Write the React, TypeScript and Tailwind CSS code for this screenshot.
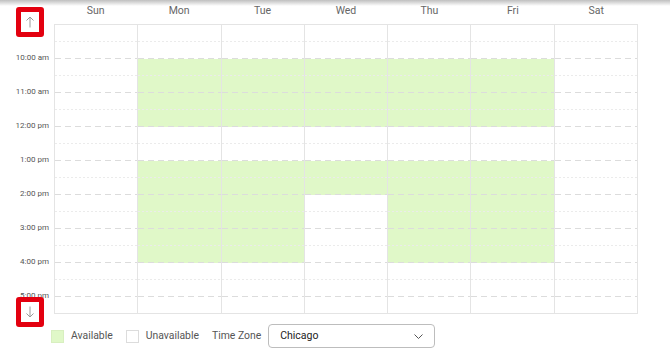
import React from 'react';

const days = ['Sun', 'Mon', 'Tue', 'Wed', 'Thu', 'Fri', 'Sat'];
const hours = ['10:00 am', '11:00 am', '12:00 pm', '1:00 pm', '2:00 pm', '3:00 pm', '4:00 pm', '5:00 pm'];

// slot i covers 9:00 + 30i min .. +30 min
const isAvailable = (day: number, slot: number) => {
    if (day < 1 || day > 5) return false;
    if (slot >= 2 && slot <= 5) return true;
    if (day === 3) return slot >= 8 && slot <= 9;
    return slot >= 8 && slot <= 13;
};

const Arrow: React.FC<{ down?: boolean }> = ({ down }) => (
    <svg width="10" height="12" viewBox="0 0 10 12" fill="none" stroke="#9a9a9a" strokeWidth="1">
        {down ? (
            <>
                <path d="M5 0.5V11" />
                <path d="M1.5 7.5L5 11L8.5 7.5" />
            </>
        ) : (
            <>
                <path d="M5 1V11.5" />
                <path d="M1.5 4.5L5 1L8.5 4.5" />
            </>
        )}
    </svg>
);

const ScrollButton: React.FC<{ down?: boolean; className?: string }> = ({ down, className }) => (
    <div className={`w-[28px] h-[30px] border-[5px] border-[#e3000f] rounded-[3px] bg-white flex items-center justify-center ${className ?? ''}`}>
        <Arrow down={down} />
    </div>
);

const DayColumn: React.FC<{ day: number }> = ({ day }) => (
    <div className="flex-1 flex flex-col border-l border-[#e4e4e4]">
        {Array.from({ length: 17 }).map((_, i) => {
            const line =
                i === 16
                    ? 'bg-[#e4e4e4]'
                    : i % 2 === 1
                        ? 'bg-[repeating-linear-gradient(90deg,#dcdcdc_0_6px,transparent_6px_10px)]'
                        : 'bg-[repeating-linear-gradient(90deg,#ebebeb_0_2px,transparent_2px_4px)]';
            return (
                <div key={i} className={`h-[17px] flex flex-col ${isAvailable(day, i) ? 'bg-[#e0f8c8]' : ''}`}>
                    <div className="flex-1" />
                    <div className={`h-px ${line}`} />
                </div>
            );
        })}
    </div>
);

export default function App() {
    return (
        <div className="relative w-[670px] h-[351px] bg-white overflow-hidden font-['Roboto',sans-serif]">
            <div className="flex">
                <div className="w-[54px] flex flex-col">
                    <div className="h-[41px]">
                        <ScrollButton className="mt-[7px] ml-[16px]" />
                    </div>
                    {hours.map(h => (
                        <div key={h} className="h-[34px] flex items-center justify-end pr-[5px] text-[8px] text-[#555]">
                            {h}
                        </div>
                    ))}
                </div>
                <div className="w-[584px] flex flex-col">
                    <div className="h-[24px] flex">
                        {days.map(d => (
                            <div key={d} className="flex-1 text-center text-[10.5px] leading-[22px] text-[#666]">
                                {d}
                            </div>
                        ))}
                    </div>
                    <div className="flex border-t border-r border-[#e4e4e4]">
                        {days.map((d, i) => (
                            <DayColumn key={d} day={i} />
                        ))}
                    </div>
                </div>
            </div>

            <ScrollButton down className="absolute left-[16px] top-[297px] h-[29px]" />

            <div className="flex items-center h-[24px] mt-[10px] pl-[51px] text-[10.4px] text-[#555]">
                <div className="w-[13px] h-[13px] bg-[#e0f8c8] border border-[#d8efc0]" />
                <span className="ml-[7px]">Available</span>
                <div className="ml-[13px] w-[13px] h-[13px] bg-white border border-[#dcdcdc]" />
                <span className="ml-[7px]">Unavailable</span>
                <span className="ml-[13px]">Time Zone</span>
                <div className="ml-[7px] w-[167px] h-[24px] border border-[#bdbdbd] rounded-[4px] flex items-center justify-between pl-[11px] pr-[11px] text-[10.5px] text-[#222]">
                    <span>Chicago</span>
                    <svg width="9" height="5" viewBox="0 0 9 5" fill="none" stroke="#555" strokeWidth="1">
                        <path d="M0.5 0.5L4.5 4.5L8.5 0.5" />
                    </svg>
                </div>
            </div>

            <div className="pointer-events-none absolute left-0 top-0 w-full h-[6px] bg-linear-to-b from-[#bfbfbf] to-transparent" />
        </div>
    );
}
